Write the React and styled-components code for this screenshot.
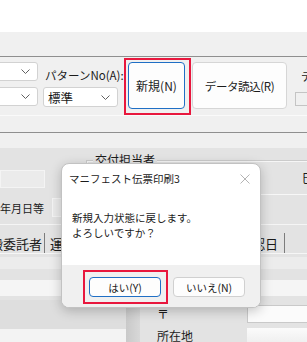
import React from "react";
import styled, { createGlobalStyle } from "styled-components";

const GlobalStyle = createGlobalStyle`
  html, body {
    margin: 0;
    padding: 0;
    background: #ffffff;
  }
  body {
    font-family: "Noto Sans CJK JP", "Noto Sans", sans-serif;
    color: #1b1b1b;
  }
`;

const Chevron = () => (
  <svg width="9" height="5" viewBox="0 0 9 5">
    <polyline points="0.5,0.5 4.5,4.5 8.5,0.5" fill="none" stroke="#606060" strokeWidth="1" />
  </svg>
);

const CloseIcon = () => (
  <svg width="10" height="10" viewBox="0 0 10 10">
    <path d="M0.5 0.5 L9.5 9.5 M9.5 0.5 L0.5 9.5" stroke="#b4b4b4" strokeWidth="1" fill="none" />
  </svg>
);

export default function App() {
  return (
    <>
      <GlobalStyle />
      <Screen>
        <TopBlank />
        <Toolbar>
          <Rule $top={24} />
          <ToolRow>
            <ComboStack $left={-44} $w={82}>
              <Combo>
                <span />
                <Chevron />
              </Combo>
              <Combo>
                <span />
                <Chevron />
              </Combo>
            </ComboStack>
            <ComboStack $left={5} $w={75}>
              <FieldLabel>パターンNo(A):</FieldLabel>
              <Combo $tall>
                <span>標準</span>
                <Chevron />
              </Combo>
            </ComboStack>
            <Highlight $left={6} $top={1} $pad="2px 4px 4px 2px">
              <ToolButton $w={57} $focus>新規(N)</ToolButton>
            </Highlight>
            <ToolButton $w={95} $left={1} $top={5} $tight>
              データ読込(R)
            </ToolButton>
            <RightStub>
              <StubLabel>テ</StubLabel>
              <StubBox />
            </RightStub>
          </ToolRow>
          <Rule $light />
          <Rule $top={16} />
        </Toolbar>

        <Form>
          <GroupBand>
            <FormField $w={45} $h={18} $top={22} />
            <GroupBox>
              <Legend>交付担当者</Legend>
              <GroupInner>
                <CutChar>巳</CutChar>
              </GroupInner>
            </GroupBox>
          </GroupBand>

          <DateBand>
            <RowLabel>年月日等</RowLabel>
            <FormField $w={30} $h={19} $left={8} />
          </DateBand>

          <TabBar>
            <Tab $cut={-10} $pad="0 2px 0 0">搬委託者</Tab>
            <Tab $pad="0 0 0 5px" $open>運搬受託者</Tab>
            <TabEnd>
              <Tab $pad="0 6px 0 0">確認日</Tab>
            </TabEnd>
          </TabBar>

          <Strip $top={3} $h={12} $tone="#ececec" />
          <Strip $top={11} $h={16} $tone="#f5f5f5" />

          <BottomRow>
            <LeftPanel>
              <PanelWhite />
            </LeftPanel>
            <Splitter />
            <AddrLabels>
              <AddrLabel>〒</AddrLabel>
              <AddrLabel>所在地</AddrLabel>
            </AddrLabels>
            <AddrFields>
              <AddrBox $h={18} />
              <AddrBox $h={16} $soft />
            </AddrFields>
          </BottomRow>
        </Form>

        <Dialog>
          <DialogTitle>
            <span>マニフェスト伝票印刷3</span>
            <CloseIcon />
          </DialogTitle>
          <DialogBody>
            <div>新規入力状態に戻します。</div>
            <div>よろしいですか？</div>
          </DialogBody>
          <DialogFooter>
            <Highlight $pad="5px 5px 5px 4px">
              <DialogButton $focus>はい(Y)</DialogButton>
            </Highlight>
            <DialogButton $left={5} $top={7}>いいえ(N)</DialogButton>
          </DialogFooter>
        </Dialog>
      </Screen>
    </>
  );
}

// styling
const Screen = styled.div`
  position: relative;
  width: 307px;
  height: 342px;
  overflow: hidden;
  display: flex;
  flex-direction: column;
  font-size: 11px;
`;

const TopBlank = styled.div`
  flex: none;
  height: 32px;
  background: #ffffff;
`;

const Toolbar = styled.div`
  flex: none;
  height: 116px;
  background: #f0f0f0;
  display: flex;
  flex-direction: column;
`;

const Rule = styled.div`
  flex: none;
  height: 1px;
  margin-top: ${(p) => p.$top || 0}px;
  background: ${(p) => (p.$light ? "#fafafa" : "#8f8f8f")};
`;

const ToolRow = styled.div`
  flex: none;
  height: 58px;
  display: flex;
  align-items: flex-start;
`;

const ComboStack = styled.div`
  flex: none;
  margin-left: ${(p) => p.$left}px;
  width: ${(p) => p.$w}px;
  padding-top: 5px;
  display: flex;
  flex-direction: column;
  gap: 6px;
`;

const Combo = styled.div`
  box-sizing: border-box;
  height: ${(p) => (p.$tall ? 20 : 19)}px;
  background: #ffffff;
  border: 1px solid #d2d2d2;
  border-radius: 3px;
  display: flex;
  align-items: center;
  justify-content: space-between;
  padding: 0 7px 0 4px;
  font-size: 12.5px;
`;

const FieldLabel = styled.div`
  height: 19px;
  margin-bottom: -6px;
  padding-top: 6px;
  padding-left: 2px;
  line-height: 14px;
  font-size: 11.5px;
  white-space: nowrap;
`;

const Highlight = styled.div`
  flex: none;
  display: flex;
  margin-left: ${(p) => p.$left || 0}px;
  margin-top: ${(p) => p.$top || 0}px;
  padding: ${(p) => p.$pad};
  border: 2px solid #e8173d;
`;

const ToolButton = styled.button`
  flex: none;
  width: ${(p) => p.$w}px;
  height: 47px;
  margin: ${(p) => p.$top || 0}px 0 0 ${(p) => p.$left || 0}px;
  padding: 0;
  background: #fdfdfd;
  border: 1px solid ${(p) => (p.$focus ? "#1f6fc5" : "#d6d6d6")};
  border-radius: 4px;
  font-family: inherit;
  font-size: ${(p) => (p.$tight ? 11.5 : 12)}px;
  letter-spacing: ${(p) => (p.$tight ? "-0.4px" : "0")};
  color: #1b1b1b;
  white-space: nowrap;
`;

const RightStub = styled.div`
  flex: none;
  margin-left: 8px;
  padding-top: 12px;
  display: flex;
  flex-direction: column;
`;

const StubLabel = styled.div`
  margin-left: 6px;
  line-height: 14px;
  font-size: 11px;
`;

const StubBox = styled.div`
  margin-top: 9px;
  width: 20px;
  height: 14px;
  box-sizing: border-box;
  border: 1px solid #c4c4c4;
  background: #f0f0f0;
`;

const Form = styled.div`
  flex: 1;
  background: #e3e3e3;
  display: flex;
  flex-direction: column;
`;

const GroupBand = styled.div`
  flex: none;
  height: 47px;
  display: flex;
  align-items: flex-start;
`;

const FormField = styled.div`
  flex: none;
  width: ${(p) => p.$w}px;
  height: ${(p) => p.$h}px;
  margin-top: ${(p) => p.$top || 0}px;
  margin-left: ${(p) => p.$left || 0}px;
  box-sizing: border-box;
  background: #ebebeb;
  border: 1px solid #f4f4f4;
`;

const GroupBox = styled.div`
  flex: 1;
  margin-left: 41px;
  margin-top: 12px;
  height: 33px;
  display: flex;
  flex-direction: column;
  border-top: 1px solid #cbcbcb;
  border-left: 1px solid #cbcbcb;
  border-bottom: 1px solid #f7f7f7;
  box-shadow: inset 1px 1px 0 #f6f6f6;
`;

const Legend = styled.span`
  align-self: flex-start;
  margin: -9px 0 0 6px;
  padding: 0 2px;
  background: #e3e3e3;
  line-height: 16px;
  font-size: 12px;
`;

const GroupInner = styled.div`
  display: flex;
  justify-content: flex-end;
  padding-top: 3px;
`;

const CutChar = styled.span`
  margin-right: -7px;
  font-size: 12px;
  line-height: 14px;
`;

const DateBand = styled.div`
  flex: none;
  height: 30px;
  display: flex;
  align-items: center;
  padding-bottom: 4px;
  box-sizing: border-box;
  border-bottom: 1px solid #f5f5f5;
`;

const RowLabel = styled.span`
  font-size: 11px;
  line-height: 14px;
  white-space: nowrap;
`;

const TabBar = styled.div`
  flex: none;
  margin-top: 8px;
  height: 20px;
  display: flex;
  align-items: stretch;
  border-bottom: 1px solid #f6f6f6;
  white-space: nowrap;
`;

const Tab = styled.div`
  display: flex;
  align-items: center;
  margin-left: ${(p) => p.$cut || 0}px;
  padding: ${(p) => p.$pad || "0"};
  border-right: ${(p) => (p.$open ? "none" : "1px solid #7c7c7c")};
  font-size: 13px;
`;

const TabEnd = styled.div`
  margin-left: auto;
  margin-right: 22px;
  display: flex;
`;

const Strip = styled.div`
  flex: none;
  margin-top: ${(p) => p.$top}px;
  height: ${(p) => p.$h}px;
  background: ${(p) => p.$tone};
`;

const BottomRow = styled.div`
  flex: 1;
  margin-top: 4px;
  display: flex;
`;

const LeftPanel = styled.div`
  flex: none;
  width: 126px;
  background: #dedede;
  display: flex;
  flex-direction: column;
  justify-content: flex-end;
`;

const PanelWhite = styled.div`
  height: 15px;
  background: #f3f3f3;
`;

const Splitter = styled.div`
  flex: none;
  width: 14px;
  background: linear-gradient(90deg, #c9c9c9, #d8d8d8);
`;

const AddrLabels = styled.div`
  flex: none;
  padding: 6px 0 0 17px;
  display: flex;
  flex-direction: column;
  gap: 7px;
`;

const AddrLabel = styled.span`
  font-size: 12px;
  line-height: 15px;
`;

const AddrFields = styled.div`
  margin-left: auto;
  width: 62px;
  margin-right: -2px;
  padding-top: 5px;
  display: flex;
  flex-direction: column;
  gap: 5px;
`;

const AddrBox = styled.div`
  height: ${(p) => p.$h}px;
  box-sizing: border-box;
  background: ${(p) =>
    p.$soft ? "linear-gradient(180deg, #fbfbfb, #eeeeee)" : "#fbfbfb"};
  border: ${(p) => (p.$soft ? "none" : "1px solid #c9c9c9")};
`;

const Dialog = styled.div`
  position: absolute;
  left: 61px;
  top: 163px;
  width: 200px;
  height: 145px;
  box-sizing: border-box;
  background: #ffffff;
  border: 1px solid #c2c2c2;
  border-radius: 8px;
  box-shadow: 0 3px 12px rgba(0, 0, 0, 0.22);
  overflow: hidden;
  display: flex;
  flex-direction: column;
  font-size: 10.5px;
`;

const DialogTitle = styled.div`
  flex: none;
  height: 29px;
  padding: 0 10px 0 7px;
  display: flex;
  align-items: center;
  justify-content: space-between;
  white-space: nowrap;
`;

const DialogBody = styled.div`
  flex: none;
  height: 72px;
  box-sizing: border-box;
  padding: 17px 0 0 10px;
  line-height: 15px;
`;

const DialogFooter = styled.div`
  flex: 1;
  background: #f0f0f0;
  display: flex;
  align-items: flex-start;
  padding: 5px 0 0 21px;
`;

const DialogButton = styled.button`
  flex: none;
  width: 72px;
  height: 20px;
  margin: ${(p) => p.$top || 0}px 0 0 ${(p) => p.$left || 0}px;
  padding: 0;
  background: #fdfdfd;
  border: 1px solid ${(p) => (p.$focus ? "#1f6fc5" : "#d0d0d0")};
  border-radius: 4px;
  font-family: inherit;
  font-size: 10.5px;
  color: #1b1b1b;
  white-space: nowrap;
`;
